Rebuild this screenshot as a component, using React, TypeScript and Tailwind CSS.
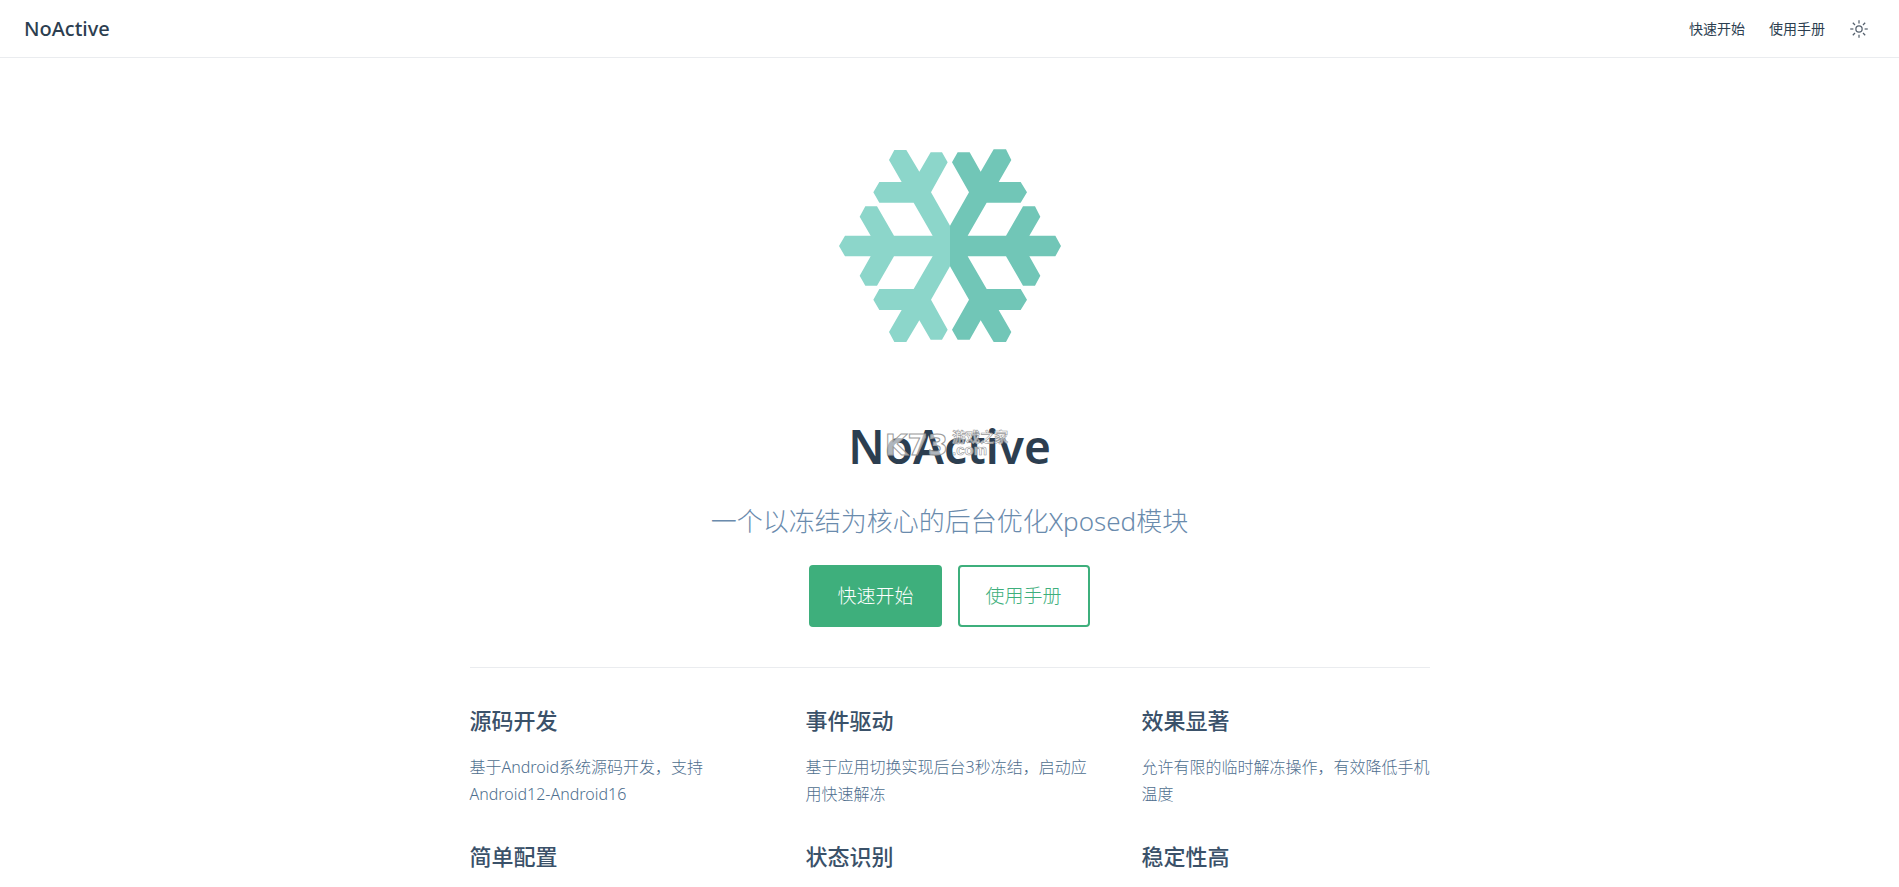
type Feature = {
  title: string;
  details?: string;
};

const features: Feature[] = [
  { title: "源码开发", details: "基于Android系统源码开发，支持Android12-Android16" },
  { title: "事件驱动", details: "基于应用切换实现后台3秒冻结，启动应用快速解冻" },
  { title: "效果显著", details: "允许有限的临时解冻操作，有效降低手机温度" },
  { title: "简单配置" },
  { title: "状态识别" },
  { title: "稳定性高" },
];

function SunIcon() {
  return (
    <svg viewBox="0 0 32 32" className="h-5 w-5" fill="currentColor" aria-hidden="true">
      <path d="M16 12.005a4 4 0 1 1-4 4a4.005 4.005 0 0 1 4-4m0-2a6 6 0 1 0 6 6a6 6 0 0 0-6-6z" />
      <path d="M5.394 6.813l1.414-1.415l3.506 3.506L8.9 10.318z" />
      <path d="M2 15.005h5v2H2z" />
      <path d="M5.394 25.197L8.9 21.691l1.414 1.415l-3.506 3.505z" />
      <path d="M15 25.005h2v5h-2z" />
      <path d="M21.687 23.106l1.414-1.415l3.506 3.506l-1.414 1.414z" />
      <path d="M25 15.005h5v2h-5z" />
      <path d="M21.687 8.904l3.506-3.506l1.414 1.415l-3.506 3.505z" />
      <path d="M15 2.005h2v5h-2z" />
    </svg>
  );
}

function Snowflake() {
  return (
    <svg viewBox="0 0 840 840" className="h-[280px] w-[280px]" role="img" aria-label="NoActive">
      <g transform="translate(30 72)">
        <path
          fill="#8cd6ca"
          d="M390 287L333 187L383 97L366 67L332 67L298 125L259 60L223 60L207 90L245 156L178 156L160 187L178 218L281 218L338 317L222 317L171 229L136 229L119 260L152 317L75 317L57 348L75 379L152 379L119 437L136 467L171 467L222 379L338 379L281 477L178 477L160 509L178 540L245 540L207 606L223 636L259 636L298 571L332 629L366 629L383 599L333 509L390 409Z"
        />
        <path
          fill="#71c6b7"
          d="M390 287L447 187L396 97L413 67L449 67L482 125L521 58L558 58L574 90L536 156L602 156L621 187L602 218L500 218L443 317L558 317L609 229L645 229L661 260L628 317L706 317L723 348L706 379L628 379L661 437L645 467L609 467L558 379L443 379L500 477L602 477L621 509L602 540L536 540L574 606L558 636L521 636L482 571L449 629L413 629L396 599L447 509L390 409Z"
        />
      </g>
    </svg>
  );
}

function Watermark() {
  return (
    <svg
      viewBox="0 0 130 32"
      className="pointer-events-none absolute top-1.5 left-9 h-8 w-[130px] overflow-visible"
      fill="#ffffff"
      fillOpacity="0.65"
      stroke="#9a9a9a"
      strokeWidth="1"
    >
      <text x="1" y="27" fontFamily="DejaVu Sans" fontSize="29" fontWeight="700">
        K73
      </text>
      <text x="68" y="14" fontFamily="Noto Sans CJK SC" fontSize="14" fontWeight="700" strokeWidth="0.6">
        游戏之家
      </text>
      <text x="68" y="27" fontFamily="Liberation Sans" fontSize="15" fontWeight="700" strokeWidth="0.6">
        .com
      </text>
    </svg>
  );
}

export default function App() {
  const cssButton = "rounded border-2 border-[#3eaf7c] px-[26px] py-[14px] text-[19px] leading-[30px]";

  return (
    <div className="h-screen overflow-hidden bg-white font-['Noto_Sans','Noto_Sans_CJK_SC',sans-serif] text-[#2c3e50]">
      <header className="flex h-[58px] items-center justify-between border-b border-[#eaecef] px-6">
        <a href="#" className="text-xl leading-9 font-medium">
          NoActive
        </a>
        <nav className="flex items-center gap-6 pr-1.5 text-sm">
          <a href="#start">快速开始</a>
          <a href="#manual">使用手册</a>
          <button aria-label="切换主题" className="text-[#56616e]">
            <SunIcon />
          </button>
        </nav>
      </header>

      <main className="mx-auto max-w-[960px]">
        <section className="flex flex-col items-center pt-12">
          <Snowflake />
          <div className="relative mt-9">
            <h1 className="text-[46px] leading-[48px] font-semibold">NoActive</h1>
            <Watermark />
          </div>
          <p className="mt-[34px] text-[26px] leading-[34px] font-light text-[#6a8bad]">
            一个以冻结为核心的后台优化Xposed模块
          </p>
          <div className="mt-[27px] flex gap-4 font-light">
            <button className={`${cssButton} bg-[#3eaf7c] text-white`}>快速开始</button>
            <button className={`${cssButton} bg-white text-[#3eaf7c]`}>使用手册</button>
          </div>
        </section>

        <section className="mt-10 grid grid-cols-3 gap-x-12 border-t border-[#eaecef] pt-[38px]">
          {features.map((feature) => (
            <div key={feature.title} className="mb-[34px]">
              <h2 className="text-[22px] leading-7 font-medium text-[#3a5169]">{feature.title}</h2>
              {feature.details && (
                <p className="mt-5 leading-[27px] font-light text-[#4e6e8e]">{feature.details}</p>
              )}
            </div>
          ))}
        </section>
      </main>
    </div>
  );
}
